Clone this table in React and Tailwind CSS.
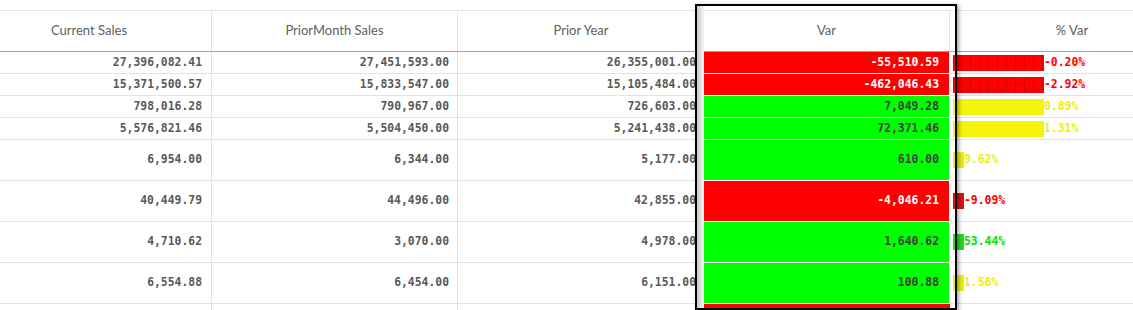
import React from "react";

const rows = [
  { cur: "27,396,082.41", pm: "27,451,593.00", py: "26,355,001.00", v: "-55,510.59", pct: "-0.20%", tone: "red", big: true, tall: false },
  { cur: "15,371,500.57", pm: "15,833,547.00", py: "15,105,484.00", v: "-462,046.43", pct: "-2.92%", tone: "red", big: true, tall: false },
  { cur: "798,016.28", pm: "790,967.00", py: "726,603.00", v: "7,049.28", pct: "0.89%", tone: "yellow", big: true, tall: false },
  { cur: "5,576,821.46", pm: "5,504,450.00", py: "5,241,438.00", v: "72,371.46", pct: "1.31%", tone: "yellow", big: true, tall: false },
  { cur: "6,954.00", pm: "6,344.00", py: "5,177.00", v: "610.00", pct: "9.62%", tone: "yellow", big: false, tall: true },
  { cur: "40,449.79", pm: "44,496.00", py: "42,855.00", v: "-4,046.21", pct: "-9.09%", tone: "red", big: false, tall: true },
  { cur: "4,710.62", pm: "3,070.00", py: "4,978.00", v: "1,640.62", pct: "53.44%", tone: "green", big: false, tall: true },
  { cur: "6,554.88", pm: "6,454.00", py: "6,151.00", v: "100.88", pct: "1.56%", tone: "yellow", big: false, tall: true },
];

const barBig = {
  red: "bg-[repeating-linear-gradient(90deg,#ff0000_0px,#ff0000_8px,#e00000_8px,#e00000_9px)]",
  yellow: "bg-[#f3f30c]",
  green: "bg-[#00ee00]",
};

const barSmall = {
  red: "bg-[#e01010]",
  yellow: "bg-[#ecec10]",
  green: "bg-[#22dd22]",
};

const pctText = {
  red: "text-[#ff0000]",
  yellow: "text-[#f0f000]",
  green: "text-[#00e600]",
};

const num = "font-['DejaVu_Sans_Mono',monospace] font-bold text-[11.4px]";

function Row({ r }) {
  const h = r.tall ? "h-[41px]" : "h-[22px]";
  const neg = r.v.startsWith("-");
  return (
    <div className={`flex ${h}`}>
      <div className={`w-[212px] shrink-0 flex items-center justify-end pr-[9px] border-r border-b border-[#e3e3e3] text-[#595959] ${num}`}>
        {r.cur}
      </div>
      <div className={`w-[246px] shrink-0 flex items-center justify-end pr-[8px] border-r border-b border-[#e3e3e3] text-[#595959] ${num}`}>
        {r.pm}
      </div>
      <div className={`w-[246px] shrink-0 flex items-center justify-end pr-[8px] border-b border-[#e3e3e3] text-[#595959] ${num}`}>
        {r.py}
      </div>
      <div
        className={`w-[246px] shrink-0 flex items-center justify-end pr-[10px] border-r border-b border-white ${num} ${
          neg ? "bg-[#ff0000] text-white" : "bg-[#00ff00] text-[#404040]"
        }`}
      >
        {r.v}
      </div>
      <div className={`flex-1 flex items-center pl-[3px] border-b border-[#e3e3e3] ${num}`}>
        <div className={`h-[16px] shrink-0 ${r.big ? "w-[91px] " + barBig[r.tone] : "w-[11px] " + barSmall[r.tone]}`} />
        <span className={pctText[r.tone]}>{r.pct}</span>
      </div>
    </div>
  );
}

export default function App() {
  return (
    <div className="relative w-[1133px] h-[310px] overflow-hidden bg-white pt-[10px]">
      <div className="flex h-[42px] border-t border-b border-t-[#e6e6e6] border-b-[#a3a3a3] font-['Lato',sans-serif] text-[13px] text-[#606060]">
        <div className="w-[212px] shrink-0 flex items-center justify-center pr-[33px] border-r border-[#e3e3e3]">Current Sales</div>
        <div className="w-[246px] shrink-0 flex items-center justify-center border-r border-[#e3e3e3]">PriorMonth Sales</div>
        <div className="w-[246px] shrink-0 flex items-center justify-center">Prior Year</div>
        <div className="w-[246px] shrink-0 flex items-center justify-center border-r border-[#e3e3e3]">Var</div>
        <div className="flex-1 flex items-center justify-center pl-[61px]">% Var</div>
      </div>
      {rows.map((r, i) => (
        <Row key={i} r={r} />
      ))}
      <div className="flex h-[41px]">
        <div className="w-[212px] shrink-0 border-r border-[#e3e3e3]" />
        <div className="w-[246px] shrink-0 border-r border-[#e3e3e3]" />
        <div className="w-[246px] shrink-0" />
        <div className="w-[246px] shrink-0 bg-[#ff0000]" />
        <div className="flex-1" />
      </div>

      {/* selected column frame */}
      <div className="absolute left-[695px] top-[4px] w-[262px] h-[306px] border-2 border-black shadow-[2px_1px_4px_rgba(0,0,0,0.35)] pointer-events-none">
        <div className="absolute left-0 top-0 bottom-0 w-[7px] bg-gradient-to-r from-[#c8c8c8] via-[#e2e2e2] to-[#f4f4f4]" />
      </div>
    </div>
  );
}
